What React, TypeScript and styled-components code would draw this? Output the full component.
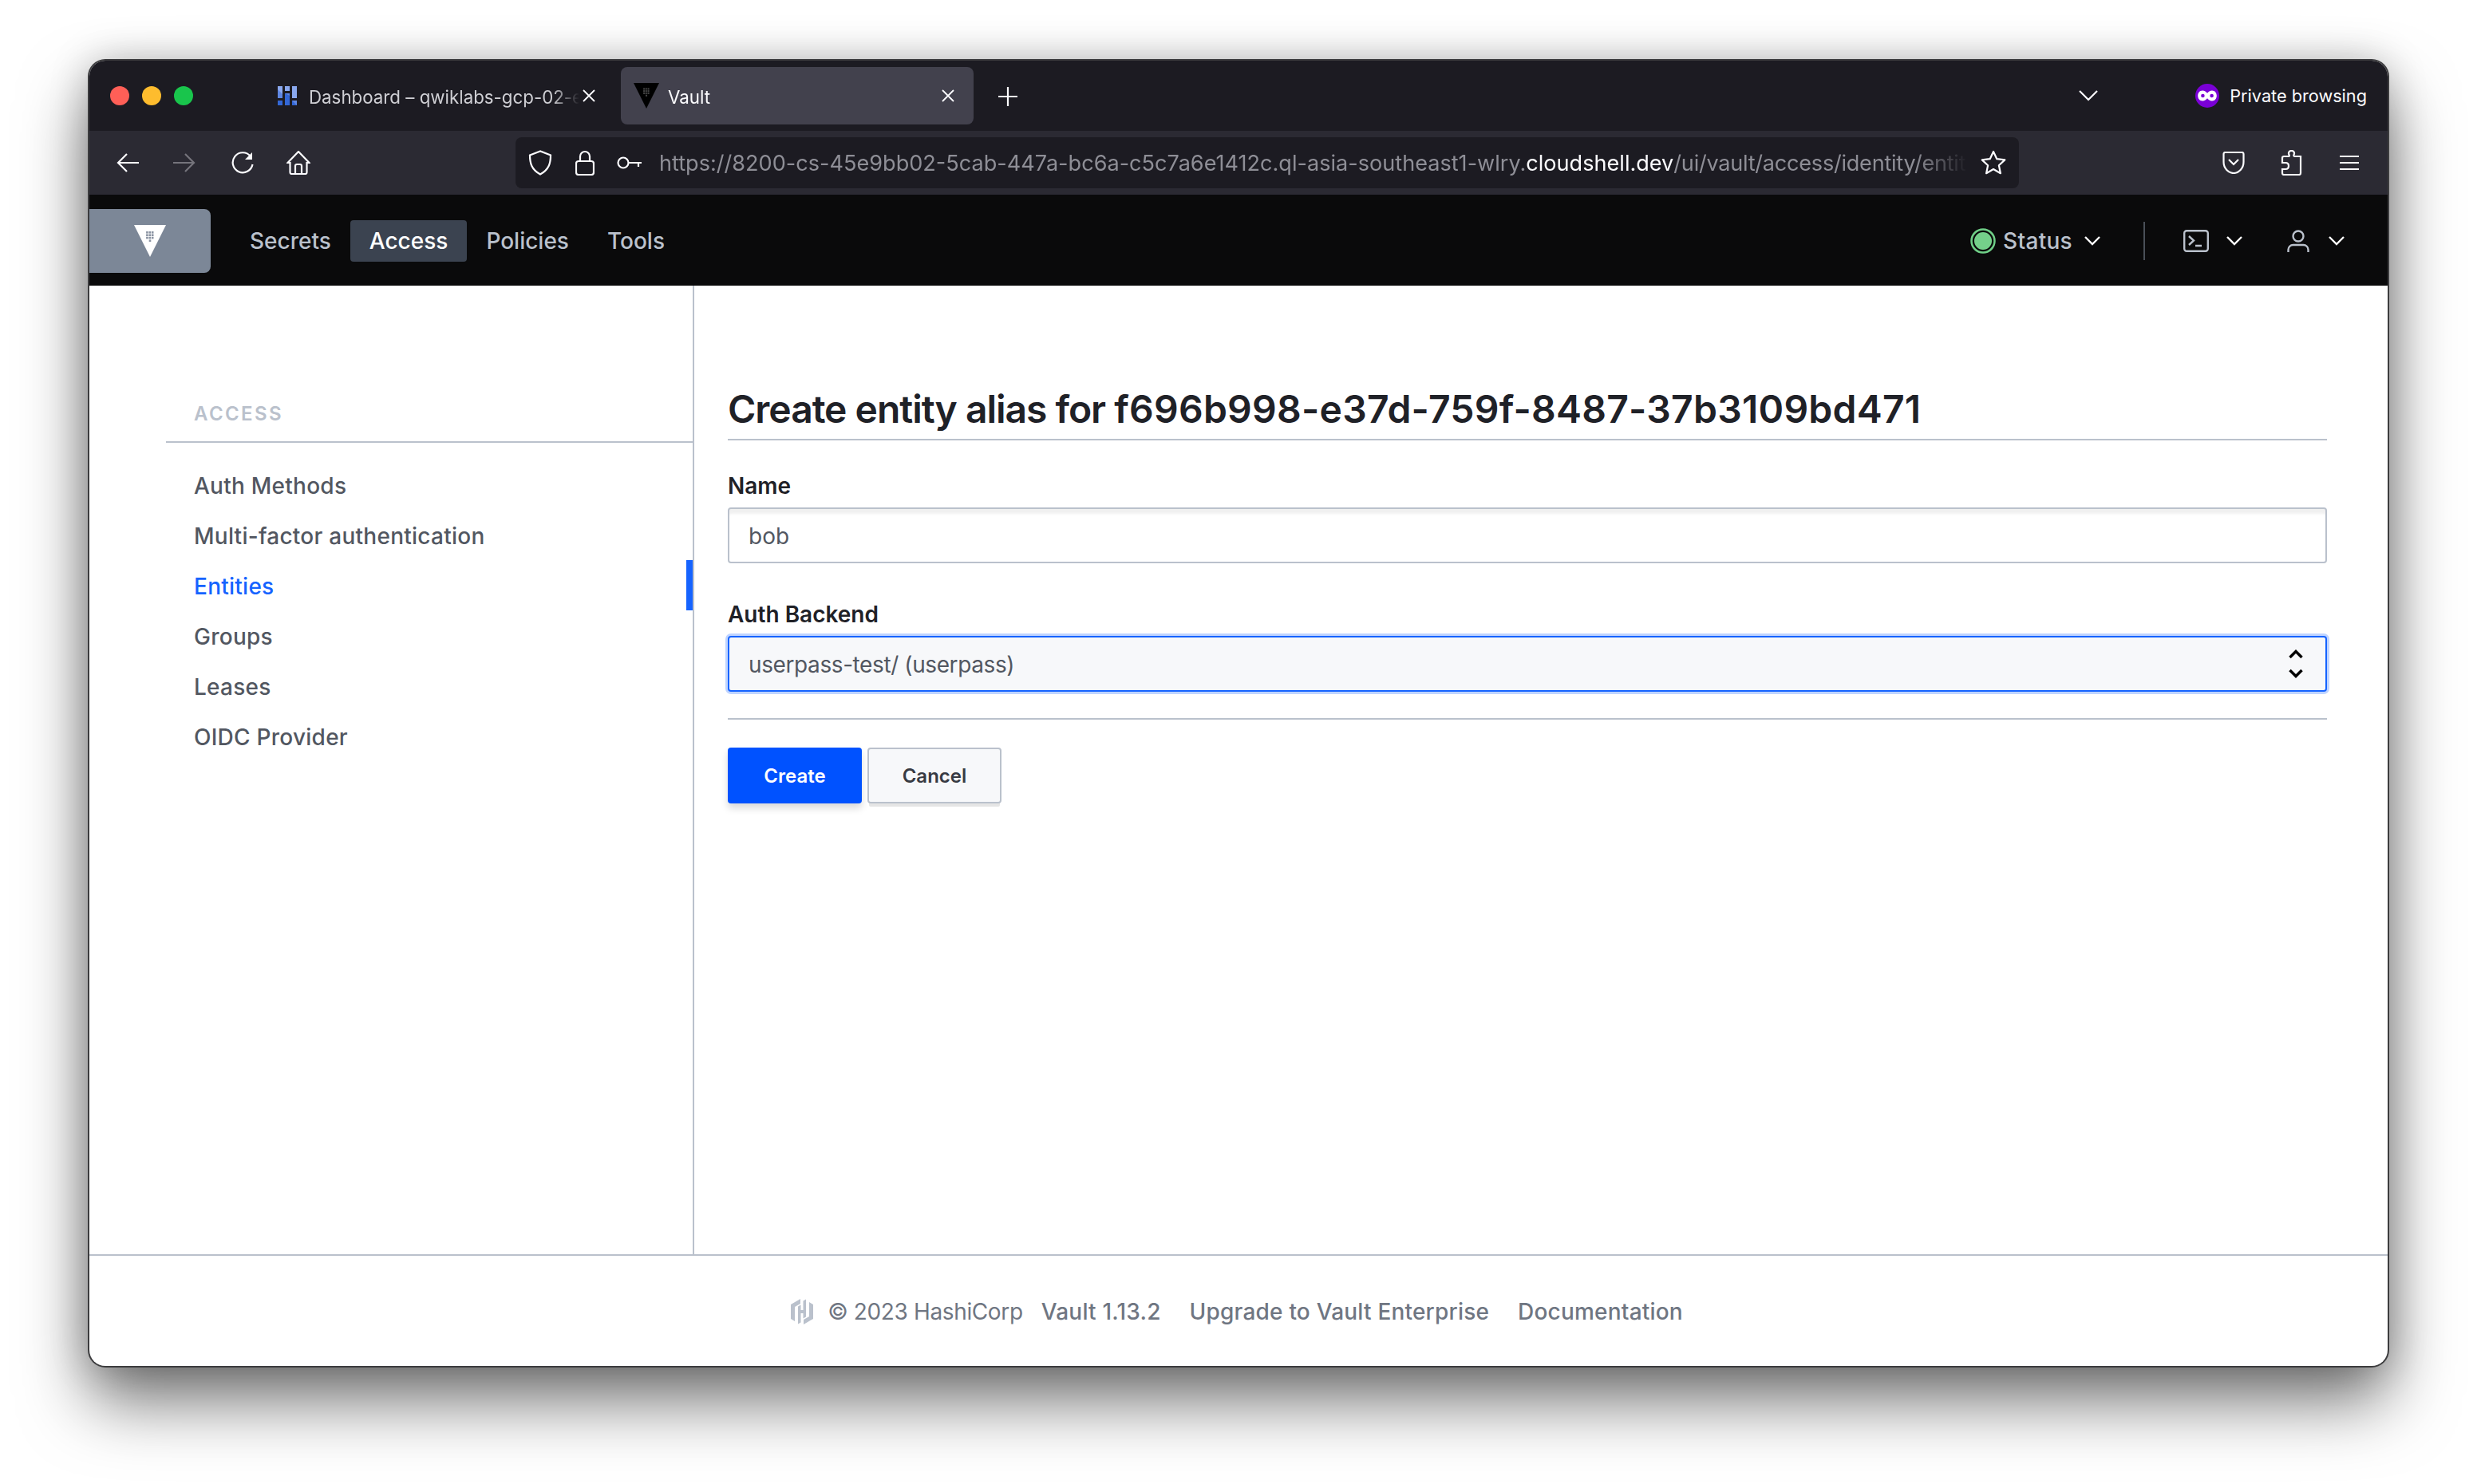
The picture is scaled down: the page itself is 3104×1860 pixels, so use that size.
import React from "react";
import styled, { createGlobalStyle } from "styled-components";

const GlobalStyle = createGlobalStyle`
  html, body { margin: 0; padding: 0; background: #fff; }
  body { font-family: Inter, "Liberation Sans", sans-serif; }
  * { box-sizing: border-box; }
`;

const Page = styled.div`
  width: 3104px;
  height: 1860px;
  padding: 76px 112px 148px;
  background: #fff;
  overflow: hidden;
`;

const Window = styled.div`
  height: 100%;
  display: flex;
  flex-direction: column;
  border-radius: 20px;
  overflow: hidden;
  background: #fff;
  box-shadow: 0 0 0 2px #3c3c3e, 0 44px 84px rgba(0, 0, 0, 0.55), 0 0 50px rgba(0, 0, 0, 0.22);
`;

const TabBar = styled.div`
  height: 88px;
  flex: none;
  display: flex;
  align-items: center;
  padding: 0 26px;
  background: #1c1b22;
`;

const Light = styled.span<{ $color: string }>`
  width: 24px;
  height: 24px;
  border-radius: 50%;
  margin-right: 16px;
  background: ${(p) => p.$color};
`;

const Tab = styled.div<{ $active?: boolean; $width: number; $left: number; $gap: number; $right: number }>`
  width: ${(p) => p.$width}px;
  height: 72px;
  margin-left: ${(p) => p.$left}px;
  display: flex;
  align-items: center;
  gap: ${(p) => p.$gap}px;
  padding: 0 ${(p) => p.$right}px 0 16px;
  border-radius: 8px;
  background: ${(p) => (p.$active ? "#42414d" : "transparent")};
  color: ${(p) => (p.$active ? "#fbfbfe" : "#cfcfd4")};
  font-size: 22.3px;
`;

const TabTitle = styled.span<{ $tight?: boolean }>`
  flex: 1;
  min-width: 0;
  padding-top: 2px;
  margin-right: ${(p) => (p.$tight ? -12 : 0)}px;
  white-space: nowrap;
  overflow: hidden;
  -webkit-mask-image: linear-gradient(to right, #000 90%, transparent 100%);
  mask-image: linear-gradient(to right, #000 90%, transparent 100%);
`;

const NewTab = styled.svg`
  margin-left: 31px;
  margin-top: 2px;
`;

const TabBarEnd = styled.div`
  margin-left: auto;
  display: flex;
  align-items: center;
`;

const PrivateLabel = styled.span`
  margin-left: 13px;
  font-size: 21.7px;
  color: #fbfbfe;
`;

const Toolbar = styled.div`
  height: 80px;
  flex: none;
  display: flex;
  align-items: center;
  padding: 0 35px 0 34px;
  background: #2b2a33;
`;

const ToolButton = styled.svg<{ $left: number }>`
  margin-left: ${(p) => p.$left}px;
  flex: none;
`;

const UrlBar = styled.div`
  width: 1884px;
  height: 64px;
  margin-left: 257px;
  flex: none;
  display: flex;
  align-items: center;
  padding: 0 16px;
  border-radius: 8px;
  background: #1c1b22;
`;

const UrlText = styled.div`
  flex: 1;
  min-width: 0;
  margin-left: 21px;
  margin-right: 16px;
  padding-top: 1px;
  white-space: nowrap;
  overflow: hidden;
  font-size: 27.1px;
  color: #8e8e96;
  -webkit-mask-image: linear-gradient(to right, #000 96%, transparent 100%);
  mask-image: linear-gradient(to right, #000 96%, transparent 100%);
  b {
    font-weight: 400;
    color: #fbfbfe;
  }
`;

const UrlTail = styled.span`
  letter-spacing: -0.25px;
`;

const ToolbarEnd = styled.div`
  margin-left: auto;
  display: flex;
  align-items: center;
`;

const VaultNav = styled.nav`
  height: 114px;
  flex: none;
  display: flex;
  align-items: center;
  padding-top: 2px;
  background: #0a0a0b;
`;

const LogoBox = styled.div`
  width: 152px;
  height: 80px;
  margin-right: 25px;
  display: flex;
  align-items: center;
  justify-content: center;
  border-radius: 0 8px 8px 0;
  background: #7c8797;
`;

const NavLink = styled.a<{ $active?: boolean }>`
  height: 52px;
  padding: 0 24px;
  display: flex;
  align-items: center;
  border-radius: 4px;
  font-size: 28px;
  font-weight: 500;
  color: ${(p) => (p.$active ? "#fff" : "#bac1cc")};
  background: ${(p) => (p.$active ? "#3b4350" : "transparent")};
`;

const NavRight = styled.div`
  margin-left: auto;
  padding-right: 54px;
  display: flex;
  align-items: center;
  font-size: 28px;
  font-weight: 500;
  letter-spacing: 0.3px;
  color: #bac1cc;
`;

const NavDivider = styled.span`
  width: 2px;
  height: 48px;
  margin: 0 48px 0 54px;
  background: #4a4f58;
`;

const Body = styled.div`
  flex: 1;
  min-height: 0;
  display: flex;
`;

const Sidebar = styled.aside`
  width: 758px;
  flex: none;
  padding: 144px 0 0 96px;
  border-right: 2px solid #bac1cc;
`;

const SidebarHeading = styled.div`
  padding: 0 0 17px 35px;
  border-bottom: 2px solid #bac1cc;
  font-size: 24px;
  line-height: 34px;
  font-weight: 600;
  letter-spacing: 0.1em;
  color: #bac1cc;
`;

const Menu = styled.div`
  margin-top: 23px;
`;

const MenuItem = styled.a<{ $active?: boolean }>`
  position: relative;
  display: block;
  height: 63px;
  padding-left: 35px;
  line-height: 63px;
  font-size: 28px;
  font-weight: 500;
  letter-spacing: 0.25px;
  color: ${(p) => (p.$active ? "#1563ff" : "#525761")};
  ${(p) =>
    p.$active &&
    `&::after {
      content: "";
      position: absolute;
      top: -2px;
      right: 0;
      bottom: 2px;
      width: 8px;
      background: #1563ff;
    }`}
`;

const Main = styled.main`
  flex: 1;
  min-width: 0;
  padding: 125px 76px 0 42px;
`;

const Title = styled.h1`
  margin: 0;
  padding-bottom: 7px;
  border-bottom: 2px solid #bac1cc;
  font-size: 48px;
  line-height: 60px;
  font-weight: 600;
  letter-spacing: -1.03px;
  color: #1f2127;
`;

const TitleId = styled.span`
  letter-spacing: 0.24px;
`;

const Field = styled.div<{ $top: number }>`
  margin-top: ${(p) => p.$top}px;
`;

const Label = styled.label`
  display: block;
  margin-bottom: 10px;
  font-size: 28px;
  line-height: 34px;
  font-weight: 600;
  color: #1f2127;
`;

const TextInput = styled.div`
  height: 70px;
  padding: 2px 24px 0;
  display: flex;
  align-items: center;
  border: 2px solid #bac1cc;
  border-radius: 4px;
  box-shadow: inset 0 7px 3px -1px rgba(0, 0, 0, 0.06);
  font-size: 28px;
  color: #525761;
`;

const SelectBox = styled(TextInput)`
  justify-content: space-between;
  border-color: #1563ff;
  background: #f7f8fa;
  box-shadow: 0 0 0 3px #bfd4ff;
  padding-right: 28px;
  letter-spacing: -0.4px;
  svg {
    margin-top: -2px;
  }
`;

const FormRule = styled.div`
  height: 2px;
  margin-top: 33px;
  background: #bac1cc;
`;

const Actions = styled.div`
  display: flex;
  gap: 7px;
  margin-top: 35px;
`;

const Button = styled.button<{ $primary?: boolean }>`
  width: 168px;
  height: 70px;
  padding: 0;
  border-radius: 4px;
  border: ${(p) => (p.$primary ? "none" : "2px solid #bac1cc")};
  background: ${(p) => (p.$primary ? "#0052ff" : "#f7f8fa")};
  color: ${(p) => (p.$primary ? "#fff" : "#373a42")};
  font-family: inherit;
  font-size: 24px;
  font-weight: 600;
  box-shadow: ${(p) => (p.$primary ? "0 6px 10px rgba(0,0,0,.15)" : "0 6px 0 -2px rgba(0,0,0,.1)")};
`;

const Footer = styled.footer`
  height: 140px;
  flex: none;
  display: flex;
  align-items: center;
  justify-content: center;
  padding: 2px 4px 0 0;
  border-top: 2px solid #bac1cc;
  font-size: 28px;
  color: #6f7682;
`;

const Copyright = styled.span`
  margin: 0 23px 0 18px;
  letter-spacing: -0.37px;
`;

const FooterLink = styled.a`
  margin-right: 36px;
  font-weight: 500;
  letter-spacing: 0.2px;
  &:last-child {
    margin-right: 0;
  }
`;

const Chevron = ({ left = 0, stroke = "#fff" }: { left?: number; stroke?: string }) => (
  <ToolButton $left={left} width="20" height="12" viewBox="0 0 20 12" fill="none">
    <path d="M1 1l9 9 9-9" stroke={stroke} strokeWidth="2.4" />
  </ToolButton>
);

const VaultMark = ({ size, fill, dots }: { size: number; fill: string; dots: string }) => (
  <svg width={size} height={size} viewBox="0 0 40 40">
    <path d="M0 0h40L20 40z" fill={fill} />
    {[0, 1, 2].map((r) =>
      [0, 1, 2].map((c) => (
        <rect key={`${r}${c}`} x={15.1 + c * 3.4} y={8 + r * 3.4} width="2.6" height="2.6" fill={dots} />
      ))
    )}
    <rect x="18.7" y="18.4" width="2.6" height="2.6" fill={dots} />
  </svg>
);

const white = { fill: "none", stroke: "#fbfbfe", strokeWidth: 2.2 };

export default function App() {
  return (
    <Page>
      <GlobalStyle />
      <Window>
        <TabBar>
          <Light $color="#ff5f57" />
          <Light $color="#febc2e" />
          <Light $color="#19c54c" />
          <Tab $width={446} $left={74} $gap={15} $right={31}>
            <svg width="24" height="24" viewBox="0 0 24 24" style={{ flex: "none" }}>
              <path d="M0 0h6v15H0zM9 0h6v6H9zM18 0h6v15h-6z" fill="#8aa8ee" />
              <path d="M0 4l6 6v5H0zM9 9h6v15H9zM0 18h6v6H0zM18 18h6v6h-6z" fill="#5f87e3" />
              <path d="M0 18h6v6H0zM9 9l6 3v12H9zM18 18l6 6h-6z" fill="#3367d6" />
            </svg>
            <TabTitle $tight>Dashboard – qwiklabs-gcp-02-e</TabTitle>
            <svg width="18" height="18" viewBox="0 0 18 18" style={{ flex: "none" }}>
              <path d="M2 2l14 14M16 2L2 16" {...white} strokeWidth={1.8} />
            </svg>
          </Tab>
          <Tab $active $width={442} $left={0} $gap={11} $right={23}>
            <VaultMark size={32} fill="#000" dots="#444" />
            <TabTitle>Vault</TabTitle>
            <svg width="18" height="18" viewBox="0 0 18 18" style={{ flex: "none" }}>
              <path d="M2 2l14 14M16 2L2 16" {...white} strokeWidth={1.8} />
            </svg>
          </Tab>
          <NewTab width="24" height="24" viewBox="0 0 24 24">
            <path d="M12 0v24M0 12h24" {...white} />
          </NewTab>
          <TabBarEnd>
            <svg width="24" height="16" viewBox="0 0 24 16">
              <path d="M1 2l11 11L23 2" {...white} />
            </svg>
            <svg width="30" height="30" viewBox="0 0 30 30" style={{ marginLeft: 122 }}>
              <circle cx="15" cy="15" r="15" fill="#7a00d6" />
              <path
                d="M9 8.500c2.700 0 4.400 1.700 6 3.200 1.600-1.500 3.300-3.200 6-3.200 3.400 0 5.800 2.900 5.800 6.500s-2.400 6.500-5.800 6.500c-2.700 0-4.400-1.700-6-3.200-1.600 1.500-3.300 3.200-6 3.200-3.400 0-5.800-2.900-5.800-6.500S5.600 8.500 9 8.500z"
                fill="#fff"
              />
              <circle cx="9.400" cy="15" r="2.300" fill="#7a00d6" />
              <circle cx="20.600" cy="15" r="2.300" fill="#7a00d6" />
            </svg>
            <PrivateLabel>Private browsing</PrivateLabel>
          </TabBarEnd>
        </TabBar>

        <Toolbar>
          <ToolButton $left={0} width="28" height="24" viewBox="0 0 28 24">
            <path d="M13 1L2 12l11 11M2 12h26" {...white} />
          </ToolButton>
          <ToolButton $left={43} width="28" height="24" viewBox="0 0 28 24">
            <path d="M15 1l11 11-11 11M26 12H0" {...white} stroke="#75747c" />
          </ToolButton>
          <ToolButton $left={44} width="30" height="28" viewBox="0 0 30 28">
            <path d="M25 6A12.500 12.500 0 1 0 27.500 16" {...white} />
            <path d="M27 1v9h-9z" fill="#fbfbfe" />
          </ToolButton>
          <ToolButton $left={40} width="30" height="30" viewBox="0 0 30 30">
            <path d="M15 1L1.500 15h3v12a2 2 0 0 0 2 2h17a2 2 0 0 0 2-2V15h3zM11 29V19a2 2 0 0 1 2-2h4a2 2 0 0 1 2 2v10" {...white} />
          </ToolButton>
          <UrlBar>
            <svg width="30" height="32" viewBox="0 0 30 32">
              <path d="M15 1.500L2 6.500c0 10 2 18 13 24 11-6 13-14 13-24z" {...white} />
            </svg>
            <svg width="24" height="32" viewBox="0 0 24 32" style={{ marginLeft: 29 }}>
              <path d="M6 14V8a6 6 0 0 1 12 0v6M4 14h16a3 3 0 0 1 3 3v11a3 3 0 0 1-3 3H4a3 3 0 0 1-3-3V17a3 3 0 0 1 3-3z" {...white} />
            </svg>
            <svg width="32" height="16" viewBox="0 0 32 16" style={{ marginLeft: 28 }}>
              <circle cx="8" cy="8" r="6.500" {...white} />
              <path d="M15 8h16M27 8v5" {...white} />
            </svg>
            <UrlText>
              https://8200-cs-45e9bb02-5cab-447a-bc6a-c5c7a6e1412c.ql-asia-southeast1-wlry.<b>cloudshell.dev</b>
              <UrlTail>/ui/vault/access/identity/entities/f696b998</UrlTail>
            </UrlText>
            <svg width="32" height="32" viewBox="0 0 32 32">
              <path d="M16 2l4.300 9.200 10 1.200-7.400 6.800 2 10L16 24l-8.900 5.200 2-10-7.400-6.800 10-1.200z" {...white} strokeLinejoin="round" />
            </svg>
          </UrlBar>
          <ToolbarEnd>
            <svg width="28" height="28" viewBox="0 0 28 28">
              <path d="M1.500 3a2 2 0 0 1 2-2h21a2 2 0 0 1 2 2v10c0 8-6 14-12.500 14S1.500 21 1.500 13zM8 10l6 6 6-6" {...white} />
            </svg>
            <svg width="28" height="32" viewBox="0 0 28 32" style={{ marginLeft: 45 }}>
              <path d="M4 8h6c1 0 1-1 .5-2C9 3 11 1 13.500 1S18 3 16.500 6c-.5 1 0 2 1 2H25v21a2 2 0 0 1-2 2H4a2 2 0 0 1-2-2v-5h4c3 0 4-2 4-4s-1-4-4-4H2V10a2 2 0 0 1 2-2z" {...white} />
            </svg>
            <svg width="26" height="20" viewBox="0 0 26 20" style={{ marginLeft: 45 }}>
              <path d="M1 2h24M1 10h24M1 18h24" {...white} />
            </svg>
          </ToolbarEnd>
        </Toolbar>

        <VaultNav>
          <LogoBox>
            <VaultMark size={40} fill="#fff" dots="#8a93a2" />
          </LogoBox>
          <NavLink>Secrets</NavLink>
          <NavLink $active>Access</NavLink>
          <NavLink>Policies</NavLink>
          <NavLink>Tools</NavLink>
          <NavRight>
            <svg width="32" height="32" viewBox="0 0 32 32" style={{ marginRight: 9 }}>
              <circle cx="16" cy="16" r="14.500" fill="none" stroke="#6fcf87" strokeWidth="2.500" />
              <circle cx="16" cy="16" r="11" fill="#74d08a" />
            </svg>
            Status
            <Chevron left={15} />
            <NavDivider />
            <svg width="32" height="28" viewBox="0 0 32 28">
              <rect x="1.200" y="1.200" width="29.600" height="25.600" rx="3" fill="none" stroke="#bac1cc" strokeWidth="2.400" />
              <path d="M7 8l6 5.500L7 19M15 20h8" fill="none" stroke="#bac1cc" strokeWidth="2.400" />
            </svg>
            <Chevron left={22} />
            <svg width="28" height="28" viewBox="0 0 28 28" style={{ marginLeft: 56 }}>
              <circle cx="14" cy="8" r="6.500" fill="none" stroke="#bac1cc" strokeWidth="2.400" />
              <path d="M1.500 28v-3a6 6 0 0 1 6-6h13a6 6 0 0 1 6 6v3" fill="none" stroke="#bac1cc" strokeWidth="2.400" />
            </svg>
            <Chevron left={24} />
          </NavRight>
        </VaultNav>

        <Body>
          <Sidebar>
            <SidebarHeading>ACCESS</SidebarHeading>
            <Menu>
              <MenuItem>Auth Methods</MenuItem>
              <MenuItem>Multi-factor authentication</MenuItem>
              <MenuItem $active>Entities</MenuItem>
              <MenuItem>Groups</MenuItem>
              <MenuItem>Leases</MenuItem>
              <MenuItem>OIDC Provider</MenuItem>
            </Menu>
          </Sidebar>
          <Main>
            <Title>
              Create entity alias for <TitleId>f696b998-e37d-759f-8487-37b3109bd471</TitleId>
            </Title>
            <Field $top={40}>
              <Label>Name</Label>
              <TextInput>bob</TextInput>
            </Field>
            <Field $top={47}>
              <Label>Auth Backend</Label>
              <SelectBox>
                userpass-test/ (userpass)
                <svg width="18" height="40" viewBox="0 0 18 40">
                  <path d="M1.500 12L9 4.500l7.500 7.500M1.500 28L9 35.500l7.500-7.500" fill="none" stroke="#000" strokeWidth="3.500" />
                </svg>
              </SelectBox>
            </Field>
            <FormRule />
            <Actions>
              <Button $primary>Create</Button>
              <Button>Cancel</Button>
            </Actions>
          </Main>
        </Body>

        <Footer>
          <svg width="28" height="32" viewBox="0 0 28 32">
            <path
              d="M12 0L0 7v18l5 3V10l7-4zM16 32l12-7V7l-5-3v18l-7 4zM9 9.500l3.500-2V14h3V2.500L19 .5V22.500l-3.500 2V18h-3v11.500l-3.500 2z"
              fill="#bac1cc"
            />
          </svg>
          <Copyright>© 2023 HashiCorp</Copyright>
          <FooterLink>Vault 1.13.2</FooterLink>
          <FooterLink>Upgrade to Vault Enterprise</FooterLink>
          <FooterLink>Documentation</FooterLink>
        </Footer>
      </Window>
    </Page>
  );
}
